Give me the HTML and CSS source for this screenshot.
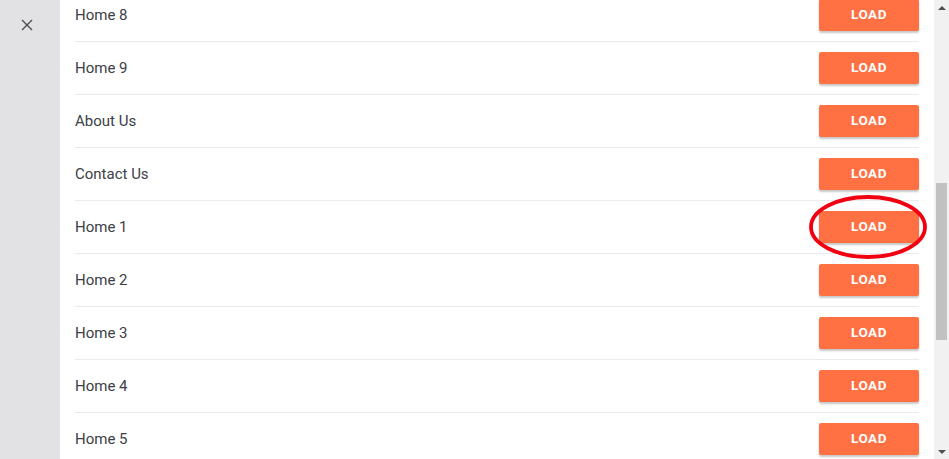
FILE: index.html
```html
<!DOCTYPE html>
<html lang="en">

<head>
    <meta charset="UTF-8">
    <meta name="viewport" content="width=device-width, initial-scale=1.0">
    <title>pages</title>
    <link rel="stylesheet" href="styles.css">
</head>

<body>
    <div class="layout">
        <aside class="side">
            <button class="close" aria-label="close">
                <svg width="12" height="12" viewBox="0 0 12 12">
                    <path d="M1 1 L11 11 M11 1 L1 11" stroke="#4a4d52" stroke-width="1.4" fill="none" />
                </svg>
            </button>
        </aside>
        <main class="content">
            <ul class="pages">
                <li class="page"><span>Home 8</span><button class="load">Load</button></li>
                <li class="page"><span>Home 9</span><button class="load">Load</button></li>
                <li class="page"><span>About Us</span><button class="load">Load</button></li>
                <li class="page"><span>Contact Us</span><button class="load">Load</button></li>
                <li class="page"><span>Home 1</span>
                    <button class="load marked">Load
                        <svg class="ring" width="120" height="66" viewBox="0 0 120 66">
                            <ellipse cx="60" cy="33" rx="57" ry="30" fill="none" stroke="#f00010" stroke-width="3.8" />
                        </svg>
                    </button>
                </li>
                <li class="page"><span>Home 2</span><button class="load">Load</button></li>
                <li class="page"><span>Home 3</span><button class="load">Load</button></li>
                <li class="page"><span>Home 4</span><button class="load">Load</button></li>
                <li class="page"><span>Home 5</span><button class="load">Load</button></li>
            </ul>
        </main>
        <div class="scrollbar">
            <span class="arrow up"></span>
            <div class="track">
                <div class="thumb"></div>
            </div>
            <span class="arrow down"></span>
        </div>
    </div>
</body>

</html>
```

FILE: styles.css
```css
html,
body {
    margin: 0;
    height: 100%;
    overflow: hidden;
}

body {
    font-family: Roboto, "Liberation Sans", Arial, sans-serif;
    background: #ffffff;
}

.layout {
    display: flex;
    height: 459px;
}

.side {
    width: 60px;
    flex: none;
    background: #e2e2e4;
}

.close {
    display: flex;
    align-items: center;
    justify-content: center;
    width: 24px;
    height: 24px;
    margin: 13px 0 0 15px;
    padding: 0;
    border: none;
    background: none;
}

.content {
    flex: 1;
    overflow: hidden;
    padding: 0 15px;
}

.pages {
    list-style: none;
    margin: -11px 0 0;
    padding: 0;
}

.page {
    display: flex;
    align-items: center;
    justify-content: space-between;
    height: 52px;
    border-bottom: 1px solid #ebebeb;
    font-size: 15px;
    color: #3c4046;
}

.load {
    position: relative;
    width: 100px;
    height: 32px;
    padding: 0 0 2px;
    border: none;
    border-radius: 2px;
    background: #ff7043;
    color: #ffffff;
    font-family: Roboto, "Liberation Sans", Arial, sans-serif;
    font-size: 13.5px;
    font-weight: 700;
    letter-spacing: 0.5px;
    text-transform: uppercase;
    box-shadow: 0 2px 2px rgba(0, 0, 0, 0.22);
}

.ring {
    position: absolute;
    left: -11px;
    top: -17px;
    pointer-events: none;
}

.scrollbar {
    width: 15px;
    flex: none;
    display: flex;
    flex-direction: column;
    background: #f1f1f1;
}

.arrow {
    height: 15px;
    flex: none;
    display: flex;
    align-items: center;
    justify-content: center;
}

.arrow::before {
    content: '';
    border-left: 4px solid transparent;
    border-right: 4px solid transparent;
}

.up::before {
    border-bottom: 4px solid #505050;
}

.down::before {
    border-top: 4px solid #505050;
}

.track {
    flex: 1;
    padding: 168px 2px 0;
}

.thumb {
    height: 157px;
    background: #c1c1c1;
}
```
